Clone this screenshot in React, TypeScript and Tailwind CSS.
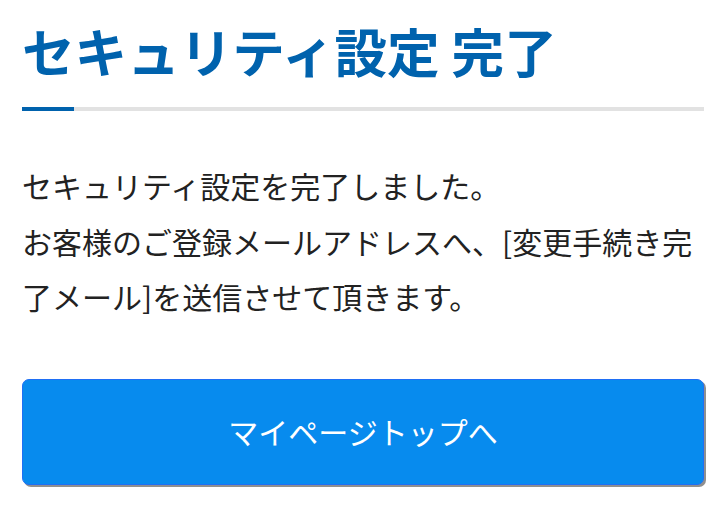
import React from "react";

const jp = { fontFamily: '"Noto Sans CJK JP", "Noto Sans", sans-serif' };

export default function App() {
  return (
    <div className="min-h-[528px] w-full bg-white px-[22px] pt-[19px]" style={jp}>
      <h1 className="text-[52.6px] font-bold leading-[62px] text-[#0062ad] whitespace-nowrap">
        セキュリティ設定 完了
      </h1>
      <div className="mt-[26px] flex h-[4px] w-full">
        <div className="h-full w-[52px] bg-[#0062ad]" />
        <div className="h-full flex-1 bg-[#e2e2e2]" />
      </div>
      <p className="mt-[47px] text-[30px] leading-[55.5px] text-[#222222]">
        セキュリティ設定を完了しました。
        <br />
        お客様のご登録メールアドレスへ、[変更手続き完了メール]を送信させて頂きます。
      </p>
      <button
        type="button"
        className="mt-[54px] flex h-[106px] w-full items-center justify-center rounded-[7px] border border-[#1f6ff5] bg-[#078bee] text-[30px] text-white shadow-[2px_2px_0_#8f8f8f]"
        style={jp}
      >
        マイページトップへ
      </button>
    </div>
  );
}
